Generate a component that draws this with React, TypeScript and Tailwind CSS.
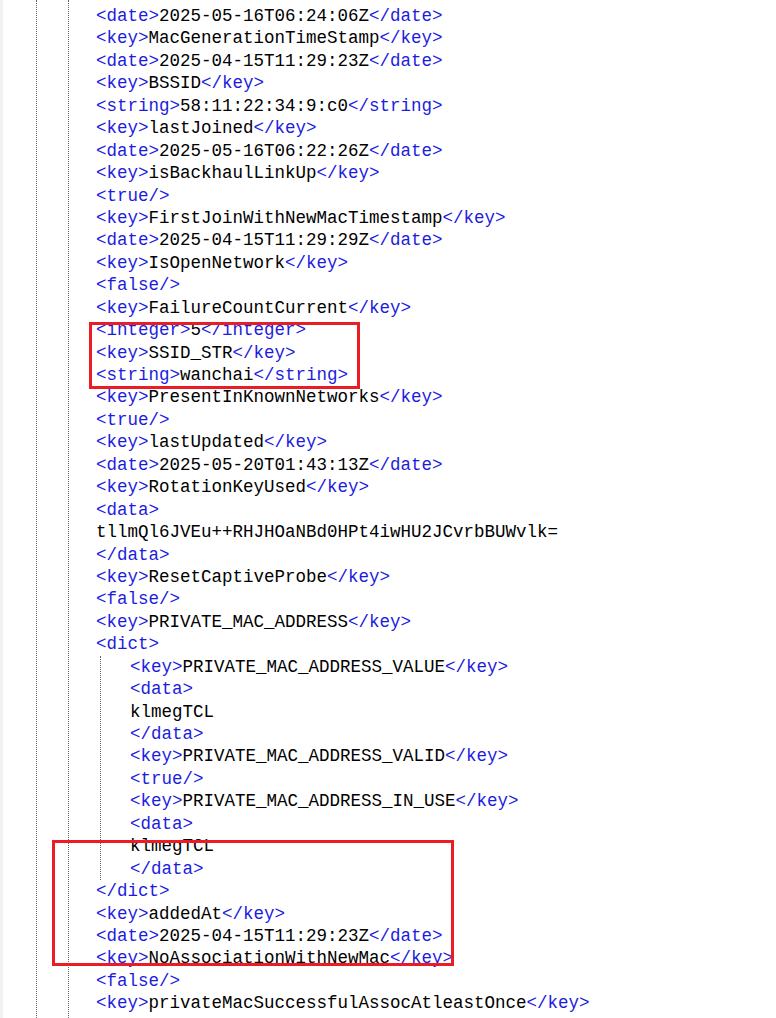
import React from "react";

const top: string[] = [
  "<date>2025-05-16T06:24:06Z</date>",
  "<key>MacGenerationTimeStamp</key>",
  "<date>2025-04-15T11:29:23Z</date>",
  "<key>BSSID</key>",
  "<string>58:11:22:34:9:c0</string>",
  "<key>lastJoined</key>",
  "<date>2025-05-16T06:22:26Z</date>",
  "<key>isBackhaulLinkUp</key>",
  "<true/>",
  "<key>FirstJoinWithNewMacTimestamp</key>",
  "<date>2025-04-15T11:29:29Z</date>",
  "<key>IsOpenNetwork</key>",
  "<false/>",
  "<key>FailureCountCurrent</key>",
  "<integer>5</integer>",
  "<key>SSID_STR</key>",
  "<string>wanchai</string>",
  "<key>PresentInKnownNetworks</key>",
  "<true/>",
  "<key>lastUpdated</key>",
  "<date>2025-05-20T01:43:13Z</date>",
  "<key>RotationKeyUsed</key>",
  "<data>",
  "tllmQl6JVEu++RHJHOaNBd0HPt4iwHU2JCvrbBUWvlk=",
  "</data>",
  "<key>ResetCaptiveProbe</key>",
  "<false/>",
  "<key>PRIVATE_MAC_ADDRESS</key>",
  "<dict>",
];

const nested: string[] = [
  "<key>PRIVATE_MAC_ADDRESS_VALUE</key>",
  "<data>",
  "klmegTCL",
  "</data>",
  "<key>PRIVATE_MAC_ADDRESS_VALID</key>",
  "<true/>",
  "<key>PRIVATE_MAC_ADDRESS_IN_USE</key>",
  "<data>",
  "klmegTCL",
  "</data>",
];

const bottom: string[] = [
  "</dict>",
  "<key>addedAt</key>",
  "<date>2025-04-15T11:29:23Z</date>",
  "<key>NoAssociationWithNewMac</key>",
  "<false/>",
  "<key>privateMacSuccessfulAssocAtleastOnce</key>",
];

// tags blue, content black (notepad++ xml colouring)
const Line = ({ text }: { text: string }) => {
  const parts = text.split(/(<[^>]+>)/).filter((p) => p !== "");
  return (
    <div className="h-[22.45px] whitespace-pre">
      {parts.map((p, i) =>
        p.startsWith("<") ? (
          <span key={i} className="text-[#1c1ce0]">
            {p}
          </span>
        ) : (
          <span key={i} className="text-black">
            {p}
          </span>
        )
      )}
    </div>
  );
};

export default function App() {
  return (
    <div className="relative h-[1018px] w-[776px] overflow-hidden bg-white font-['Liberation_Mono',monospace] text-[17.5px] leading-[22.45px]">
      <div className="flex h-full">
        <div className="flex w-[36px] shrink-0">
          <div className="w-[3px] bg-[#f1f1f1]" />
        </div>
        <div className="w-[32px] shrink-0 border-l border-dotted border-[#666]" />
        <div className="flex-1 border-l border-dotted border-[#666] pl-[27px] pt-[5px]">
          {top.map((t, i) => (
            <Line key={"t" + i} text={t} />
          ))}
          <div className="ml-[4px] border-l border-dotted border-[#666] pl-[29px]">
            {nested.map((t, i) => (
              <Line key={"n" + i} text={t} />
            ))}
          </div>
          {bottom.map((t, i) => (
            <Line key={"b" + i} text={t} />
          ))}
        </div>
      </div>

      {/* highlight boxes */}
      <div className="absolute left-[89px] top-[322px] h-[67px] w-[271px] border-[3px] border-[#ec1c24]" />
      <div className="absolute left-[52px] top-[840px] h-[126px] w-[402px] border-[3px] border-[#ec1c24]" />
    </div>
  );
}
